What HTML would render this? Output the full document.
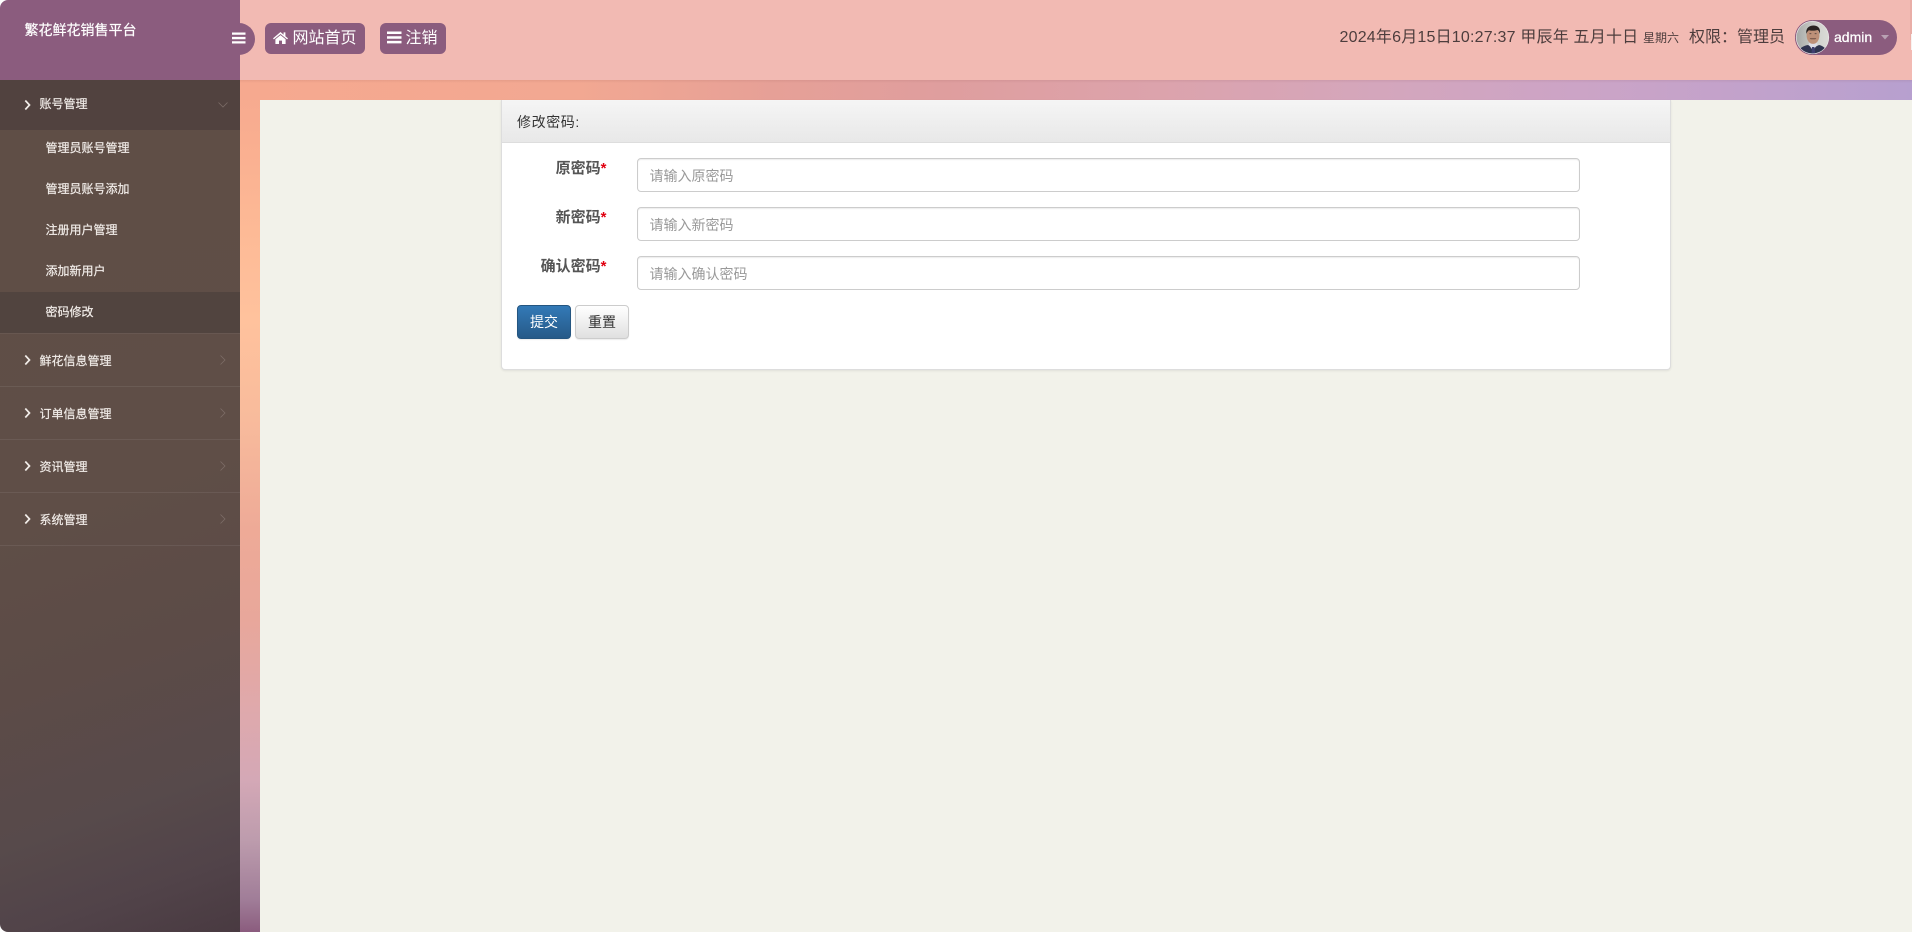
<!DOCTYPE html>
<html lang="zh-CN">
<head>
<meta charset="utf-8">
<title>繁花鲜花销售平台</title>
<style>
*{box-sizing:border-box}
html,body{margin:0;padding:0;width:1912px;height:932px;overflow:hidden;background:#fff;font-family:"Liberation Sans","Noto Sans CJK SC",sans-serif}
.a{position:absolute}
#strip-top{left:240px;top:80px;width:1672px;height:20px;background:linear-gradient(90deg,#f6a98f 0%,#f2a892 20%,#e6a097 32%,#df9e9e 42%,#dca3ac 55%,#d4a6bc 68%,#cca4c6 80%,#c2a2cb 90%,#b7a0cf 100%)}
#strip-left{left:240px;top:80px;width:20px;height:852px;background:linear-gradient(180deg,#f6a98f 0,#f9ae90 60px,#fdba96 150px,#ffc29d 240px,#f8bb9c 340px,#eeaa97 450px,#e8a79b 540px,#dfa9ac 630px,#d4a8b6 700px,#bd9cad 760px,#a07d98 820px,#8b5c7e 852px)}
#header-shadow{left:240px;top:80px;width:1672px;height:3px;background:linear-gradient(180deg,rgba(120,60,60,.1),rgba(120,60,60,0))}
#main{left:260px;top:100px;width:1652px;height:832px;background:#f2f2ea}
#logo{left:0;top:0;width:240px;height:80px;background:#8b5c7e;border-top-left-radius:8px;color:#fff;font-size:14px;line-height:20px;padding:20px 0 0 24.500px;-webkit-text-stroke:.2px #fff}
#header{left:240px;top:0;width:1672px;height:80px;background:#f2bab3}
#side{left:0;top:80px;width:240px;height:852px;border-bottom-left-radius:8px;overflow:hidden;background:linear-gradient(160deg,#5f4e46 0%,#5f4e47 48%,#5c4b47 66%,#574a4b 82%,#514349 92%,#493a41 100%)}
.m{position:absolute;left:0;width:240px;color:#f1ece8;font-size:12px;line-height:18px;-webkit-text-stroke:.2px #f1ece8}
.m span{position:absolute;left:39.500px;top:50%;margin-top:-8.500px;white-space:nowrap}
.m.t span{margin-top:-10px}
.s span{left:45.500px;margin-top:-9.500px}
.b{border-bottom:1px solid rgba(255,255,255,.07)}
.ar{position:absolute;left:24px;top:50%;margin-top:-6px}
.cr{position:absolute;left:218px;top:50%;margin-top:-6px}
.tb{background:#8b5c7e;border-radius:6px;color:#fff;font-size:16px;line-height:31px;height:31px;white-space:nowrap}
#card{left:501px;top:100px;width:1170px;height:270px;background:#fff;border:1px solid #ddd;border-top:0;border-radius:0 0 4px 4px;box-shadow:0 1px 2px rgba(0,0,0,.08)}
#card-h{left:501px;top:100px;width:1170px;height:43px;background:linear-gradient(180deg,#f5f5f5,#e8e8e8);border:1px solid #ddd;border-top:0;color:#333;font-size:14px;line-height:20px;padding:12px 0 0 15px;letter-spacing:.6px}
.lb{position:absolute;width:110px;left:496.500px;text-align:right;font-size:15px;line-height:20px;font-weight:700;color:#555;white-space:nowrap}
.lb i{font-style:normal;color:#e00010;font-size:15px}
.in{position:absolute;left:637px;width:943px;height:34px;background:#fff;border:1px solid #ccc;border-radius:4px;box-shadow:inset 0 1px 1px rgba(0,0,0,.075);color:#999;font-size:14px;line-height:34px;padding-left:11.500px;white-space:nowrap}
.btn{position:absolute;top:305px;height:34px;width:54px;border-radius:4px;text-align:center;font-size:14px;line-height:32px;box-shadow:0 1px 1px rgba(0,0,0,.08)}
</style>
</head>
<body>
<div id="main" class="a"></div>
<div id="strip-left" class="a"></div>
<div id="strip-top" class="a"></div>
<div id="header" class="a"></div>
<div id="header-shadow" class="a"></div>
<div class="a" style="left:1910px;top:0;width:2px;height:40px;background:#e9aea7"></div>
<div class="a" style="left:1911px;top:34px;width:1px;height:16px;background:#f8f2f0"></div>

<div class="a" style="left:223px;top:23px;width:32px;height:32px;border-radius:50%;background:#8b5c7e"></div>
<div id="logo" class="a">繁花鲜花销售平台</div>
<svg class="a" style="left:232px;top:31px" width="14" height="14" viewBox="0 0 14 14"><path d="M0 1.500h13.500v2.300H0zM0 5.900h13.500v2.300H0zM0 10.200h13.500v2.300H0z" fill="#fff"/></svg>

<div class="a tb" style="left:265px;top:23px;width:100px;padding-left:27.500px">网站首页</div>
<svg class="a" style="left:273px;top:31px" width="15" height="14" viewBox="0 0 15 14"><path d="M7.500 1 0 7.400l.9 1L7.500 3l6.600 5.400.9-1-2.600-2.200V1.400h-1.800v2.300z" fill="#fff"/><path d="M7.500 4.100 2.400 8.300V13h3.600V9.600h3V13h3.600V8.300z" fill="#fff"/></svg>
<div class="a tb" style="left:380px;top:23px;width:66px;padding-left:25.500px">注销</div>
<svg class="a" style="left:387px;top:30px" width="15" height="15" viewBox="0 0 15 15"><path d="M0 1.500h14.500V4H0zM0 6.200h14.500v2.500H0zM0 10.900h14.500v2.500H0z" fill="#fff"/></svg>

<div class="a" style="left:1339.500px;top:26px;font-size:16px;line-height:24px;color:#4d3d3d;white-space:nowrap;letter-spacing:.2px">2024年6月15日10:27:37 甲辰年 五月十日</div>
<div class="a" style="left:1643px;top:29px;font-size:12px;line-height:18px;color:#4d3d3d;white-space:nowrap">星期六</div>
<div class="a" style="left:1689px;top:26px;font-size:16px;line-height:24px;color:#4d3d3d;white-space:nowrap">权限：管理员</div>

<div class="a" style="left:1795px;top:20px;width:102px;height:35px;border-radius:18px;background:#8b5c7e"></div>
<svg class="a" style="left:1795px;top:20px" width="35" height="35" viewBox="0 0 35 35">
<defs><clipPath id="c"><circle cx="17.500" cy="17.500" r="16"/></clipPath><linearGradient id="g" x1="0" x2="1"><stop offset="0" stop-color="#a3a6a4"/><stop offset=".6" stop-color="#cfd1cd"/><stop offset="1" stop-color="#dcdcd8"/></linearGradient></defs>
<circle cx="17.500" cy="17.500" r="17.500" fill="#8b5c7e"/>
<circle cx="17.500" cy="17.500" r="16.600" fill="#eee"/>
<g clip-path="url(#c)">
<rect width="35" height="35" fill="url(#g)"/>
<path d="M2 36c1-7 5-10 11-11l5 3 6-3c5 1 8 4 9 11z" fill="#2f3450"/>
<path d="M13.500 24.500l4.500 6 4.500-6-1-2h-7z" fill="#dcdce6"/>
<path d="M17 27h2.400l1 8h-4z" fill="#3f3f70"/>
<ellipse cx="18" cy="15.500" rx="6.400" ry="8.400" fill="#bd9078"/>
<path d="M11.300 14c-.8-6 3-8.500 7.200-8.500s7.400 2.500 6.400 8.500c-.6-2.200-1.200-3.500-2.400-4-2.500.8-5.800.8-8.600.2-1 .8-2.100 2-2.600 3.800z" fill="#2a2423"/>
<path d="M14.800 18.200h6.400c0 .8-1 1.100-3.200 1.100s-3.200-.3-3.200-1.100z" fill="#6d4d42"/>
<path d="M14.500 13.700h1.800M19.700 13.700h1.800" stroke="#52403a" stroke-width=".8"/>
</g>
</svg>
<div class="a" style="left:1834px;top:27px;font-size:14px;line-height:20px;color:#fff;white-space:nowrap;-webkit-text-stroke:.25px #fff">admin</div>
<svg class="a" style="left:1881px;top:35px" width="8" height="5" viewBox="0 0 8 5"><path d="M0 0h8L4 4.500z" fill="#b9a1b3"/></svg>

<div id="side" class="a">
  <div class="m t" style="top:0;height:50px;background:#51423f;"><svg class="ar" width="7" height="12" viewBox="0 0 7 12"><path d="M1.300 1.500 5.500 6l-4.200 4.500" fill="none" stroke="#f1ece8" stroke-width="1.700"/></svg><span>账号管理</span><svg class="cr" width="10" height="12" viewBox="0 0 10 12"><path d="M.5 3.500 5 8l4.500-4.500" fill="none" stroke="#7a6b66" stroke-width=".8"/></svg></div>
  <div class="m s" style="top:48px;height:41px"><span>管理员账号管理</span></div>
  <div class="m s" style="top:89px;height:41px"><span>管理员账号添加</span></div>
  <div class="m s" style="top:130px;height:41px"><span>注册用户管理</span></div>
  <div class="m s" style="top:171px;height:41px"><span>添加新用户</span></div>
  <div class="m s" style="top:212px;height:41px;background:#51443f"><span>密码修改</span></div>
  <div class="m b" style="top:253px;height:54px;border-top:1px solid rgba(255,255,255,.05)"><svg class="ar" width="7" height="12" viewBox="0 0 7 12"><path d="M1.300 1.500 5.500 6l-4.200 4.500" fill="none" stroke="#f1ece8" stroke-width="1.700"/></svg><span>鲜花信息管理</span><svg class="cr" width="10" height="12" viewBox="0 0 10 12"><path d="M2.500 1.500 7 6l-4.500 4.500" fill="none" stroke="#7c6d66" stroke-width=".8"/></svg></div>
  <div class="m b" style="top:307px;height:53px"><svg class="ar" width="7" height="12" viewBox="0 0 7 12"><path d="M1.300 1.500 5.500 6l-4.200 4.500" fill="none" stroke="#f1ece8" stroke-width="1.700"/></svg><span>订单信息管理</span><svg class="cr" width="10" height="12" viewBox="0 0 10 12"><path d="M2.500 1.500 7 6l-4.500 4.500" fill="none" stroke="#7c6d66" stroke-width=".8"/></svg></div>
  <div class="m b" style="top:360px;height:53px"><svg class="ar" width="7" height="12" viewBox="0 0 7 12"><path d="M1.300 1.500 5.500 6l-4.200 4.500" fill="none" stroke="#f1ece8" stroke-width="1.700"/></svg><span>资讯管理</span><svg class="cr" width="10" height="12" viewBox="0 0 10 12"><path d="M2.500 1.500 7 6l-4.500 4.500" fill="none" stroke="#7c6d66" stroke-width=".8"/></svg></div>
  <div class="m b" style="top:413px;height:53px"><svg class="ar" width="7" height="12" viewBox="0 0 7 12"><path d="M1.300 1.500 5.500 6l-4.200 4.500" fill="none" stroke="#f1ece8" stroke-width="1.700"/></svg><span>系统管理</span><svg class="cr" width="10" height="12" viewBox="0 0 10 12"><path d="M2.500 1.500 7 6l-4.500 4.500" fill="none" stroke="#7c6d66" stroke-width=".8"/></svg></div>
</div>

<div id="card" class="a"></div>
<div id="card-h" class="a">修改密码:</div>

<div class="lb" style="top:159px">原密码<i>*</i></div>
<div class="in" style="top:158px">请输入原密码</div>
<div class="lb" style="top:208px">新密码<i>*</i></div>
<div class="in" style="top:207px">请输入新密码</div>
<div class="lb" style="top:257px">确认密码<i>*</i></div>
<div class="in" style="top:256px">请输入确认密码</div>

<div class="btn" style="left:517px;background:linear-gradient(180deg,#337ab7,#265a88);border:1px solid #245580;color:#fff">提交</div>
<div class="btn" style="left:575px;background:linear-gradient(180deg,#fff,#e0e0e0);border:1px solid #ccc;color:#333">重置</div>
</body>
</html>
